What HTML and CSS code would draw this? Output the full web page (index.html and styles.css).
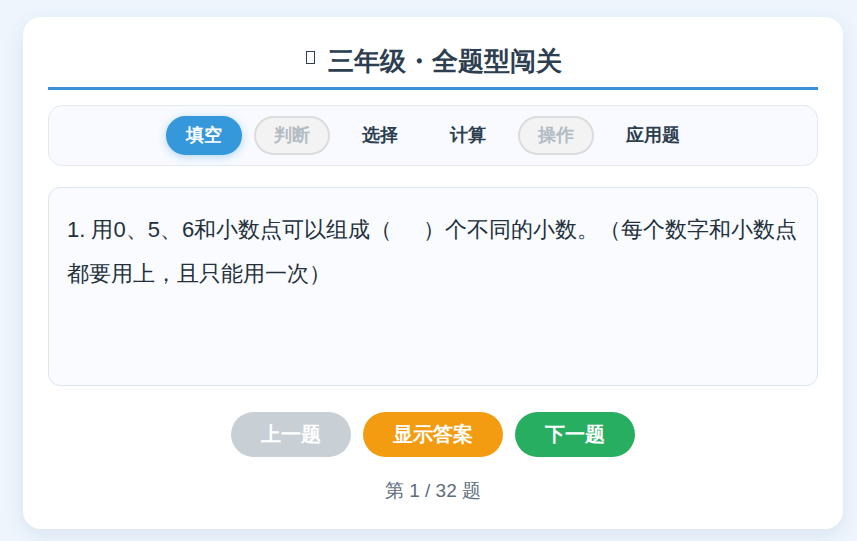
FILE: index.html
```html
<!DOCTYPE html>
<html>
<head>
<meta charset="utf-8">
<title>三年级・全题型闯关</title>
<link rel="stylesheet" href="styles.css">
</head>
<body>
<div class="card">
  <h1 class="title"><span class="glyph-box" aria-hidden="true"></span> 三年级・全题型闯关</h1>
  <div class="tabs">
    <span class="tab active">填空</span>
    <span class="tab disabled">判断</span>
    <span class="tab">选择</span>
    <span class="tab">计算</span>
    <span class="tab disabled">操作</span>
    <span class="tab">应用题</span>
  </div>
  <div class="question">1. 用0、5、6和小数点可以组成（&nbsp;&nbsp;&nbsp;&nbsp;&nbsp;）个不同的小数。（每个数字和小数点都要用上，且只能用一次）</div>
  <div class="controls">
    <button class="btn prev">上一题</button>
    <button class="btn answer">显示答案</button>
    <button class="btn next">下一题</button>
  </div>
  <div class="progress">第 1 / 32 题</div>
</div>
</body>
</html>
```
FILE: styles.css
```css
html, body {
  margin: 0;
  background: #eef5fd;
}
body {
  padding: 17px 14px 12px 23px;
  font-family: sans-serif;
  color: #2c3e50;
}
.card {
  background: #ffffff;
  border-radius: 18px;
  padding: 25px;
  box-shadow: 0 6px 20px rgba(40, 80, 130, 0.10);
}
.title {
  margin: 0 0 15px 0;
  font-size: 26px;
  line-height: 39px;
  font-weight: 700;
  text-align: center;
  padding-bottom: 6px;
  border-bottom: 3px solid #3a8fd4;
  color: #2c3e50;
}
.glyph-box {
  display: inline-block;
  box-sizing: border-box;
  width: 9px;
  height: 13px;
  border: 1.5px solid #2c3e50;
  margin: 0 6px 0 2px;
  vertical-align: 6px;
}
.tabs {
  display: flex;
  justify-content: center;
  gap: 12px;
  padding: 10px;
  background: #f8faff;
  border: 1px solid #e1e9f4;
  border-radius: 14px;
  margin-bottom: 21px;
}
.tab {
  display: inline-block;
  padding: 8px 18px;
  font-size: 18px;
  line-height: 19px;
  font-weight: 700;
  border: 2px solid transparent;
  border-radius: 22px;
  color: #2c3e50;
}
.tab.active {
  background: #3498db;
  border-color: #3498db;
  color: #ffffff;
  box-shadow: 0 2px 8px rgba(52, 152, 219, 0.35);
}
.tab.disabled {
  background: #f3f3f3;
  border-color: #dcdcdc;
  color: #b4bcc3;
}
.question {
  background: #f9fbff;
  border: 1px solid #dce6f1;
  border-radius: 12px;
  padding: 20px 8px 20px 18px;
  min-height: 157px;
  font-size: 22px;
  line-height: 44px;
  color: #23303c;
}
.controls {
  display: flex;
  justify-content: center;
  gap: 12px;
  margin-top: 26px;
}
.btn {
  font-family: sans-serif;
  font-size: 20px;
  line-height: 21px;
  font-weight: 700;
  color: #ffffff;
  border: none;
  border-radius: 23px;
  padding: 12px 30px;
}
.btn.prev { background: #c8d0d6; }
.btn.answer { background: #f39c12; }
.btn.next { background: #27ae60; }
.progress {
  margin-top: 20px;
  text-align: center;
  font-size: 19px;
  line-height: 27px;
  color: #5d6d7e;
}
```
